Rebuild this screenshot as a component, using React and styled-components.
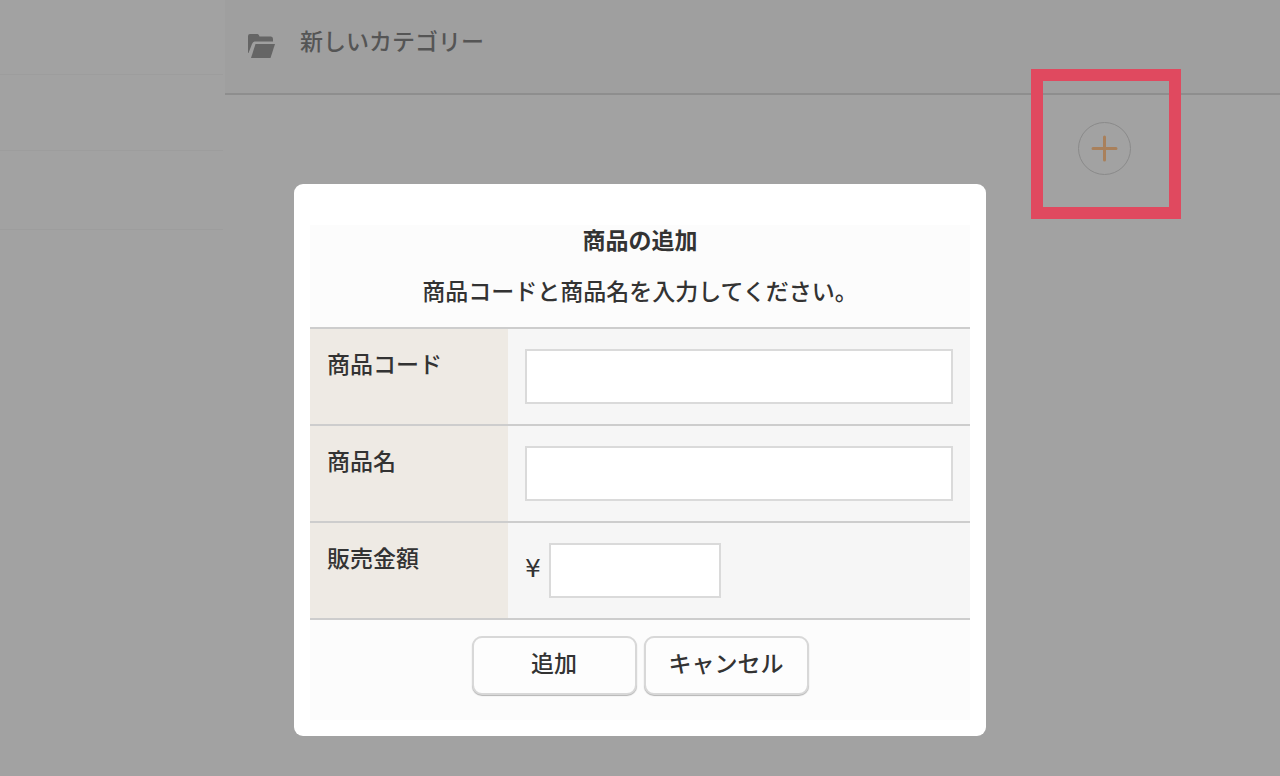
import React from "react";
import styled, { createGlobalStyle } from "styled-components";

const GlobalStyle = createGlobalStyle`
    * {
        box-sizing: border-box;
    }
    body {
        margin: 0;
        background-color: #a2a2a2;
        color: #333333;
        font-family: "Noto Sans CJK JP", sans-serif;
        font-size: 23px;
        font-weight: 500;
        line-height: 28px;
    }
    button, input {
        font: inherit;
        color: inherit;
    }
`;

const Page = styled.div`
    display: flex;
    min-height: 100vh;
`;

const SideList = styled.ul`
    width: 225px;
    flex-shrink: 0;
    margin: 0;
    padding: 0 2px 0 0;
    list-style: none;
`;

const SideItem = styled.li`
    height: ${props => props.$height}px;
    border-bottom: 1px solid #9d9d9d;
`;

const Main = styled.main`
    flex: 1;
`;

const CategoryBar = styled.header`
    display: flex;
    align-items: center;
    height: 95px;
    padding: 0 22px 10px;
    background-color: #9f9f9f;
    border-bottom: 2px solid #8e8e8e;
`;

const FolderIcon = styled.svg`
    width: 28px;
    height: 24px;
    margin: 8px 25px 0 0;
    fill: #656565;
`;

const CategoryName = styled.span`
    padding-bottom: 4px;
    color: #555555;
`;

const Toolbar = styled.div`
    display: flex;
    justify-content: flex-end;
    padding: 27px 149px 0 0;
`;

const AddArea = styled.div`
    position: relative;
    display: flex;
`;

const Highlight = styled.div`
    position: absolute;
    top: -53px;
    left: -47px;
    width: 150px;
    height: 150px;
    border: 12px solid #e0495f;
    pointer-events: none;
`;

const AddButton = styled.button`
    display: flex;
    align-items: center;
    justify-content: center;
    width: 53px;
    height: 53px;
    padding: 0;
    background: none;
    border: 1px solid #8a8a8a;
    border-radius: 50%;

    svg {
        width: 27px;
        height: 27px;
        stroke: #a9805b;
        stroke-width: 3;
        stroke-linecap: round;
    }
`;

const Overlay = styled.div`
    position: fixed;
    inset: 0;
    display: flex;
    justify-content: center;
    align-items: flex-start;
    padding-top: 184px;
    pointer-events: none;
`;

const Dialog = styled.form`
    width: 692px;
    padding: 41px 16px 16px;
    background-color: #ffffff;
    border-radius: 9px;
    pointer-events: auto;
`;

const DialogBody = styled.div`
    background-color: #fcfcfc;
    text-align: center;
`;

const Title = styled.h1`
    margin: 0;
    font-size: 23px;
    font-weight: bold;
`;

const Message = styled.p`
    margin: 0;
    padding: 23px 0;
`;

const Fields = styled.div`
    border-top: 2px solid #cdcdcd;
    text-align: left;
`;

const Row = styled.div`
    display: flex;
    border-bottom: 2px solid #cdcdcd;
`;

const Label = styled.label`
    width: 30%;
    padding: 20px 17px;
    background-color: #eeeae4;
`;

const Cell = styled.div`
    flex: 1;
    display: flex;
    align-items: center;
    gap: 8px;
    padding: 20px 17px;
    background-color: #f6f6f6;
`;

const TextBox = styled.input`
    width: ${props => props.$width || "100%"};
    height: 55px;
    padding: 0 12px;
    background-color: #ffffff;
    border: 2px solid #dadada;
    border-radius: 0;
`;

const Yen = styled.span`
    width: 16px;
    padding-bottom: 4px;
    font-family: "DejaVu Sans", sans-serif;
    font-size: 25px;
`;

const Actions = styled.div`
    display: flex;
    justify-content: center;
    gap: 7px;
    padding: 16px 0 25px;
`;

const Button = styled.button`
    width: 165px;
    height: 59px;
    padding: 0 0 8px;
    background-color: #fdfdfd;
    border: 2px solid #d8d8d8;
    border-radius: 10px;
    box-shadow: 0 1px 1px #b4b4b4;
`;

function App() {
    return (
        <>
            <GlobalStyle />
            <Page>
                <SideList>
                    <SideItem $height={75} />
                    <SideItem $height={76} />
                    <SideItem $height={79} />
                </SideList>
                <Main>
                    <CategoryBar>
                        <FolderIcon viewBox="0 0 28 24" aria-hidden="true">
                            <path d="M1 19V2Q1 0 3 0H10.500Q12 0 12.500 2.500H24Q26 2.500 26 5V7.500H7.500Q6 7.500 5 10L1.500 19Z" />
                            <path d="M8.500 10H28L23.500 24H4Z" />
                        </FolderIcon>
                        <CategoryName>新しいカテゴリー</CategoryName>
                    </CategoryBar>
                    <Toolbar>
                        <AddArea>
                            <AddButton type="button" aria-label="追加">
                                <svg viewBox="0 0 27 27">
                                    <path d="M13.500 2V25M2 13.500H25" />
                                </svg>
                            </AddButton>
                            <Highlight />
                        </AddArea>
                    </Toolbar>
                </Main>
            </Page>
            <Overlay>
                <Dialog role="dialog" aria-labelledby="dialog-title">
                    <DialogBody>
                        <Title id="dialog-title">商品の追加</Title>
                        <Message>商品コードと商品名を入力してください。</Message>
                        <Fields>
                            <Row>
                                <Label htmlFor="code">商品コード</Label>
                                <Cell><TextBox id="code" type="text" /></Cell>
                            </Row>
                            <Row>
                                <Label htmlFor="name">商品名</Label>
                                <Cell><TextBox id="name" type="text" /></Cell>
                            </Row>
                            <Row>
                                <Label htmlFor="price">販売金額</Label>
                                <Cell>
                                    <Yen>¥</Yen>
                                    <TextBox id="price" type="text" $width="172px" />
                                </Cell>
                            </Row>
                        </Fields>
                        <Actions>
                            <Button type="button">追加</Button>
                            <Button type="button">キャンセル</Button>
                        </Actions>
                    </DialogBody>
                </Dialog>
            </Overlay>
        </>
    );
}

export default App;
